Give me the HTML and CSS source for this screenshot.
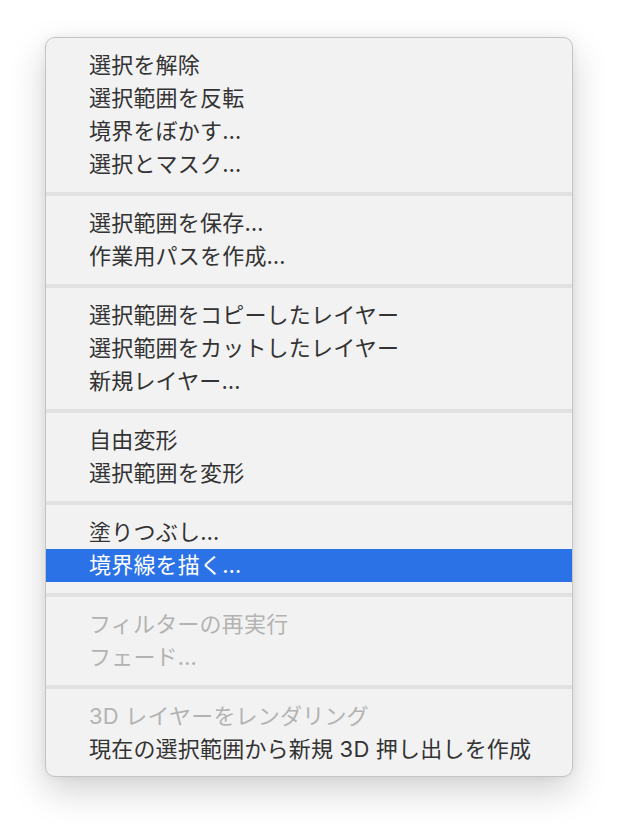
FILE: index.html
```html
<!DOCTYPE html>
<html lang="ja">
<head>
<meta charset="utf-8">
<link rel="stylesheet" href="styles.css">
</head>
<body>
<div class="menu">
  <div class="item">選択を解除</div>
  <div class="item">選択範囲を反転</div>
  <div class="item">境界をぼかす…</div>
  <div class="item">選択とマスク…</div>
  <div class="sep"></div>
  <div class="item">選択範囲を保存…</div>
  <div class="item">作業用パスを作成…</div>
  <div class="sep"></div>
  <div class="item">選択範囲をコピーしたレイヤー</div>
  <div class="item">選択範囲をカットしたレイヤー</div>
  <div class="item">新規レイヤー…</div>
  <div class="sep"></div>
  <div class="item">自由変形</div>
  <div class="item">選択範囲を変形</div>
  <div class="sep"></div>
  <div class="item">塗りつぶし…</div>
  <div class="item active">境界線を描く…</div>
  <div class="sep"></div>
  <div class="item disabled">フィルターの再実行</div>
  <div class="item disabled">フェード…</div>
  <div class="sep"></div>
  <div class="item disabled">3D レイヤーをレンダリング</div>
  <div class="item">現在の選択範囲から新規 3D 押し出しを作成</div>
</div>
</body>
</html>
```
FILE: styles.css
```css
html, body {
  margin: 0;
  padding: 0;
  background: #ffffff;
}
body {
  padding: 37px 0 54px 45px;
  font-family: "Inter", "Noto Sans CJK JP", sans-serif;
}
.menu {
  box-sizing: border-box;
  width: 528px;
  background: #f2f2f2;
  border: 1px solid #c4c4c4;
  border-radius: 10px;
  padding: 11px 0 10px;
  box-shadow: 0 14px 36px rgba(0, 0, 0, 0.18), 0 0 8px rgba(0, 0, 0, 0.06);
}
.item {
  box-sizing: border-box;
  height: 33px;
  display: flex;
  align-items: center;
  padding-left: 43px;
  padding-bottom: 5px;
  font-size: 22px;
  letter-spacing: 0.2px;
  color: #333333;
  white-space: nowrap;
}
.item.active {
  background: #2b72e6;
  color: #ffffff;
}
.item.disabled {
  color: #b3b3b3;
}
.sep {
  height: 4px;
  background: #e1e1e1;
  margin: 11px 0;
}
```
